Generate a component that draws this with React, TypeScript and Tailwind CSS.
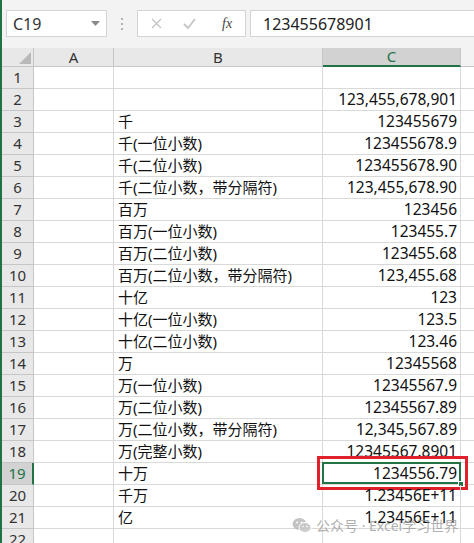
import React from 'react';

const rows: [string, string][] = [
  ['', ''],
  ['', '123,455,678,901'],
  ['千', '123455679'],
  ['千(一位小数)', '123455678.9'],
  ['千(二位小数)', '123455678.90'],
  ['千(二位小数，带分隔符)', '123,455,678.90'],
  ['百万', '123456'],
  ['百万(一位小数)', '123455.7'],
  ['百万(二位小数)', '123455.68'],
  ['百万(二位小数，带分隔符)', '123,455.68'],
  ['十亿', '123'],
  ['十亿(一位小数)', '123.5'],
  ['十亿(二位小数)', '123.46'],
  ['万', '12345568'],
  ['万(一位小数)', '12345567.9'],
  ['万(二位小数)', '12345567.89'],
  ['万(二位小数，带分隔符)', '12,345,567.89'],
  ['万(完整小数)', '12345567.8901'],
  ['十万', '1234556.79'],
  ['千万', '1.23456E+11'],
  ['亿', '1.23456E+11'],
  ['', ''],
];

const ACTIVE_ROW = 19;
const cols = 'grid grid-cols-[32px_80px_209px_138px_1fr]';
const font = "font-['Noto_Sans','Noto_Sans_CJK_SC',sans-serif]";

function FormulaBar() {
  return (
    <div className="h-[48px] bg-[#f3f3f3] flex items-start pt-[10px]">
      <div className="ml-[4px] w-[101px] h-[27px] bg-white border border-[#d4d4d4] flex items-center justify-between pl-[6px] pr-[6px]">
        <span className="text-[16px] text-[#333]">C19</span>
        <svg width="9" height="5" viewBox="0 0 9 5"><path d="M0 0h9L4.5 5z" fill="#8a8a8a" /></svg>
      </div>
      <div className="ml-[13px] w-[4px] h-[27px] flex flex-col items-center justify-center gap-[3px]">
        <span className="w-[2px] h-[2px] bg-[#b0b0b0]" />
        <span className="w-[2px] h-[2px] bg-[#b0b0b0]" />
        <span className="w-[2px] h-[2px] bg-[#b0b0b0]" />
      </div>
      <div className="ml-[13px] w-[109px] h-[27px] bg-white border border-[#d4d4d4] flex items-center">
        <svg className="ml-[13px]" width="11" height="11" viewBox="0 0 11 11">
          <path d="M1 1l9 9M10 1l-9 9" stroke="#c4c4c4" strokeWidth="1.4" />
        </svg>
        <svg className="ml-[21px]" width="13" height="11" viewBox="0 0 13 11">
          <path d="M1 6l4 4 7-9" stroke="#c4c4c4" strokeWidth="1.8" fill="none" />
        </svg>
        <span className="ml-[26px] text-[14px] italic text-[#444] font-['Liberation_Serif',serif]">fx</span>
      </div>
      <div className="ml-[4px] flex-1 h-[27px] bg-white border border-[#d4d4d4] border-r-0 flex items-center pl-[12px]">
        <span className="text-[16px] text-[#222]">123455678901</span>
      </div>
    </div>
  );
}

function ColumnHeaders() {
  return (
    <div className={`${cols} h-[19px] bg-[#e8e8e8] text-[15px] text-[#333] leading-none`}>
      <div className="border-r border-b border-[#c6c6c6] flex items-end justify-end p-[2px]">
        <svg width="12" height="12" viewBox="0 0 12 12"><path d="M12 0v12H0z" fill="#b9b9b9" /></svg>
      </div>
      <div className="border-r border-b border-[#c6c6c6] flex items-center justify-center">A</div>
      <div className="border-r border-b border-[#c6c6c6] flex items-center justify-center">B</div>
      <div className="bg-[#d2d2d2] border-r border-[#c6c6c6] border-b-2 border-b-[#217346] text-[#217346] flex items-center justify-center">C</div>
      <div className="bg-[#f3f3f3] border-b border-[#c6c6c6]" />
    </div>
  );
}

function Row({ n, label, value }: { n: number; label: string; value: string }) {
  const active = n === ACTIVE_ROW;
  return (
    <div className={`${cols} h-[22px] text-[15px] leading-none`}>
      <div
        className={
          active
            ? 'bg-[#d2d2d2] text-[#217346] border-r-2 border-r-[#217346] border-b border-b-[#c6c6c6] flex items-center justify-center'
            : 'bg-[#e8e8e8] text-[#333] border-r border-b border-[#c6c6c6] flex items-center justify-center'
        }
      >
        {n}
      </div>
      <div className="border-r border-b border-[#d9d9d9]" />
      <div className="border-r border-b border-[#d9d9d9] flex items-center pl-[4px] text-[#111]">{label}</div>
      <div className="relative border-r border-b border-[#d9d9d9] flex items-center justify-end pr-[3px] text-[#111] text-[15.5px]">
        {value}
        {active && (
          <>
            <div className="absolute -left-px -top-px right-[-1px] bottom-0 border-2 border-[#217346]" />
            <div className="absolute right-[-4px] bottom-[-3px] w-[6px] h-[6px] bg-[#217346] border border-white" />
            <div className="absolute left-[-6px] top-[-7px] right-[-8px] bottom-[-6px] border-[3.5px] border-[#e0202a]" />
          </>
        )}
      </div>
      <div className="border-b border-[#d9d9d9]" />
    </div>
  );
}

function Watermark() {
  return (
    <div className="absolute left-[290px] top-[515px] flex items-center gap-[4px] text-[#9a9a9a]/80 text-[14px]">
      <svg width="20" height="17" viewBox="0 0 20 17">
        <ellipse cx="7.5" cy="7" rx="7" ry="6" fill="#b5b5b5" fillOpacity="0.8" />
        <ellipse cx="13" cy="10.5" rx="6" ry="5" fill="#c8c8c8" fillOpacity="0.9" stroke="#fff" strokeWidth="1" />
        <circle cx="5" cy="5.5" r="0.9" fill="#fff" />
        <circle cx="9.5" cy="5.5" r="0.9" fill="#fff" />
        <circle cx="11" cy="9.5" r="0.8" fill="#fff" />
        <circle cx="15" cy="9.5" r="0.8" fill="#fff" />
      </svg>
      <span>公众号 · Excel学习世界</span>
    </div>
  );
}

export default function App() {
  return (
    <div className={`relative w-[474px] h-[543px] overflow-hidden bg-white border-l-2 border-[#217346] ${font}`}>
      <FormulaBar />
      <ColumnHeaders />
      {rows.map(([label, value], i) => (
        <Row key={i} n={i + 1} label={label} value={value} />
      ))}
      <Watermark />
    </div>
  );
}
